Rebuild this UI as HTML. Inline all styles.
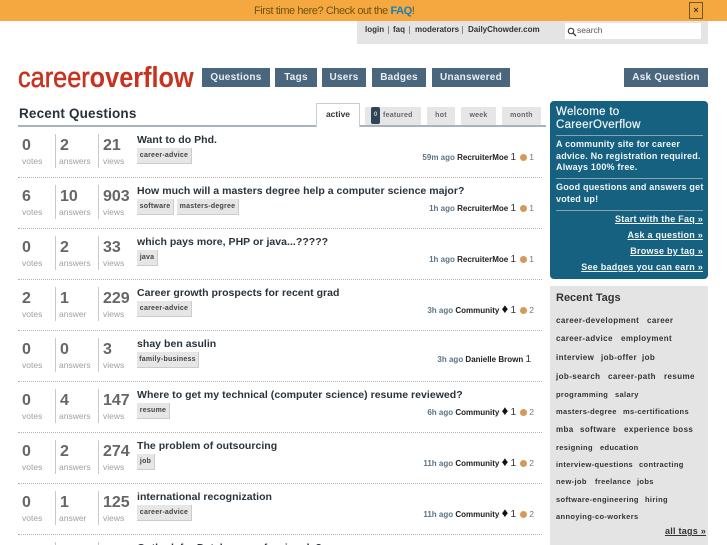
<!DOCTYPE html>
<html><head><meta charset="utf-8">
<style>
html,body{margin:0;padding:0;background:#fff}
body{width:727px;height:545px;overflow:hidden;position:relative;font-family:"Liberation Sans",sans-serif;color:#2a333c}
#w{position:absolute;left:0;top:0;width:727px;height:545px;overflow:hidden}
#w div,#w a,#w span.a{position:absolute;white-space:nowrap}
.nav{top:68px;height:19px;background:#4a667d;color:#e8eef2;font-weight:bold;font-size:10px;line-height:20px;text-align:center;letter-spacing:.25px}
.q{left:18px;width:530px;height:51px}
.sep{left:18px;width:524px;top:0;border-top:1px dotted #b5b5b5;height:0}
.n{font-size:16px;font-weight:bold;color:#666;top:2px;line-height:20px}
.l{font-size:8.5px;color:#a0a0a0;top:21px;line-height:12px}
.d{width:1px;height:34px;top:0;background:#c9c9c9}
.t{left:119px;top:-2px;font-size:10.5px;font-weight:bold;color:#2a333c;letter-spacing:.03px;line-height:16px}
.g{top:14px;height:15px;background:#e6e6e6;border-right:1px solid #ccc;border-bottom:1px solid #ccc;font-size:7px;font-weight:bold;color:#444;line-height:16px;text-align:center;letter-spacing:.25px}
.i{top:17px;font-size:8px;line-height:12px;font-weight:bold;color:#222;right:14px;text-align:right}
.i b{color:#5d7487}
.i u{text-decoration:none;font-weight:normal;font-size:10px;color:#333}
.i s{text-decoration:none;display:inline-block;width:7px;height:7px;background:#d39a5c;border-radius:50%;margin:0 2px 0 2px;vertical-align:-1px}
.i em{font-style:normal;font-weight:normal;color:#777;font-size:8.5px}
.i i{font-style:normal;font-size:13px;line-height:10px;color:#111}
.tab{top:107px;height:18px;background:#e6e6e6;font-size:7px;font-weight:bold;color:#666;text-align:center;line-height:18px;letter-spacing:.25px}
.sb{left:556px;font-size:9px;font-weight:bold;color:#f2f6f8;letter-spacing:.2px;line-height:11.5px}
.hr{left:556px;width:147px;height:1px;background:#8aa3b3}
.lk{right:24px;font-size:9px;font-weight:bold;color:#f2f6f8;text-decoration:underline;letter-spacing:.25px;line-height:12px}
.tg{font-size:8px;font-weight:bold;color:#333;line-height:12px;letter-spacing:.4px}
.ts{font-size:7.5px;letter-spacing:.35px}
</style></head><body><div id="w">

<div style="left:0;top:0;width:727px;height:21px;background:#f4a83f"></div>
<div style="left:254px;top:3px;font-size:11px;line-height:16px;color:#6e5314;letter-spacing:-.45px">First time here? Check out the <span style="color:#1a7fc0;font-weight:bold">FAQ</span>!</div>
<div style="left:689px;top:2px;width:12px;height:15px;background:#f3a93f;border:1px solid #6b5a20;color:#433;font-size:9px;font-weight:bold;line-height:15px;text-align:center">×</div>

<div style="left:357px;top:21px;width:351px;height:23px;background:#e4e4e4"></div>
<div style="left:565px;top:23px;width:136px;height:16px;background:#fff"></div>
<div style="left:365px;top:24px;font-size:8px;line-height:12px;font-weight:bold;color:#333">login</div>
<div style="left:393px;top:24px;font-size:8px;line-height:12px;font-weight:bold;color:#333">faq</div>
<div style="left:415px;top:24px;font-size:8px;line-height:12px;font-weight:bold;color:#333">moderators</div>
<div style="left:468px;top:24px;font-size:8px;line-height:12px;font-weight:bold;color:#333">DailyChowder.com</div>
<div style="left:388px;top:26px;width:1px;height:8px;background:#888"></div>
<div style="left:409px;top:26px;width:1px;height:8px;background:#888"></div>
<div style="left:462px;top:26px;width:1px;height:8px;background:#888"></div>
<svg style="position:absolute;left:567px;top:27px" width="10" height="10" viewBox="0 0 10 10"><circle cx="4" cy="4" r="2.7" fill="none" stroke="#444" stroke-width="1.2"/><path d="M6 6l3 3" stroke="#444" stroke-width="1.4"/></svg>
<div style="left:577px;top:24px;font-size:8.5px;line-height:12px;color:#555">search</div>

<div style="left:18px;top:61px;font-size:29px;line-height:34px;font-weight:bold;color:#c8321f;transform:scaleX(.872);transform-origin:0 0"><span style="font-weight:normal;-webkit-text-stroke:.5px #c8321f">career</span>overflow</div>
<div class="nav" style="left:202px;width:68px">Questions</div>
<div class="nav" style="left:275px;width:42px">Tags</div>
<div class="nav" style="left:322px;width:44px">Users</div>
<div class="nav" style="left:372px;width:54px">Badges</div>
<div class="nav" style="left:432px;width:78px">Unanswered</div>
<div class="nav" style="left:624px;width:84px">Ask Question</div>

<div style="left:19px;top:105px;font-size:13.5px;line-height:18px;font-weight:bold;letter-spacing:.17px;color:#27323c">Recent Questions</div>
<div style="left:18px;top:125px;width:528px;height:2px;background:#a7b3bd"></div>
<div style="left:316px;top:103px;width:42px;height:23px;background:#fff;border:1px solid #ccc;border-bottom:none;font-size:8.5px;font-weight:bold;color:#333;text-align:center;line-height:20px">active</div>
<div class="tab" style="left:365px;width:56px"></div>
<div style="left:371px;top:107px;width:9px;height:17px;background:#2f4557;border-radius:2px;color:#ccc;font-size:6px;font-weight:bold;text-align:center;line-height:16px">0</div>
<div style="left:383px;top:109px;font-size:7px;font-weight:bold;color:#666;line-height:14px;letter-spacing:.25px">featured</div>
<div class="tab" style="left:427px;width:28px">hot</div>
<div class="tab" style="left:461px;width:35px">week</div>
<div class="tab" style="left:502px;width:39px">month</div>

<!-- rows -->
<div class="q" style="top:134px">
<div class="n" style="left:4px">0</div><div class="l" style="left:4px">votes</div><div class="d" style="left:37px"></div>
<div class="n" style="left:42px">2</div><div class="l" style="left:41px">answers</div><div class="d" style="left:80px"></div>
<div class="n" style="left:85px">21</div><div class="l" style="left:85px">views</div>
<div class="t">Want to do Phd.</div>
<div class="g" style="left:119px;width:54px">career-advice</div>
<div class="i"><b>59m ago</b> RecruiterMoe <u>1</u> <s></s><em>1</em></div>
</div>
<div class="sep" style="top:177px"></div>

<div class="q" style="top:185px">
<div class="n" style="left:4px">6</div><div class="l" style="left:4px">votes</div><div class="d" style="left:37px"></div>
<div class="n" style="left:42px">10</div><div class="l" style="left:41px">answers</div><div class="d" style="left:80px"></div>
<div class="n" style="left:85px">903</div><div class="l" style="left:85px">views</div>
<div class="t">How much will a masters degree help a computer science major?</div>
<div class="g" style="left:119px;width:36px">software</div>
<div class="g" style="left:159px;width:61px">masters-degree</div>
<div class="i"><b>1h ago</b> RecruiterMoe <u>1</u> <s></s><em>1</em></div>
</div>
<div class="sep" style="top:228px"></div>

<div class="q" style="top:236px">
<div class="n" style="left:4px">0</div><div class="l" style="left:4px">votes</div><div class="d" style="left:37px"></div>
<div class="n" style="left:42px">2</div><div class="l" style="left:41px">answers</div><div class="d" style="left:80px"></div>
<div class="n" style="left:85px">33</div><div class="l" style="left:85px">views</div>
<div class="t">which pays more, PHP or java...?????</div>
<div class="g" style="left:119px;width:20px">java</div>
<div class="i"><b>1h ago</b> RecruiterMoe <u>1</u> <s></s><em>1</em></div>
</div>
<div class="sep" style="top:279px"></div>

<div class="q" style="top:287px">
<div class="n" style="left:4px">2</div><div class="l" style="left:4px">votes</div><div class="d" style="left:37px"></div>
<div class="n" style="left:42px">1</div><div class="l" style="left:41px">answer</div><div class="d" style="left:80px"></div>
<div class="n" style="left:85px">229</div><div class="l" style="left:85px">views</div>
<div class="t">Career growth prospects for recent grad</div>
<div class="g" style="left:119px;width:54px">career-advice</div>
<div class="i"><b>3h ago</b> Community <i>♦</i> <u>1</u> <s></s><em>2</em></div>
</div>
<div class="sep" style="top:330px"></div>

<div class="q" style="top:338px">
<div class="n" style="left:4px">0</div><div class="l" style="left:4px">votes</div><div class="d" style="left:37px"></div>
<div class="n" style="left:42px">0</div><div class="l" style="left:41px">answers</div><div class="d" style="left:80px"></div>
<div class="n" style="left:85px">3</div><div class="l" style="left:85px">views</div>
<div class="t">shay ben asulin</div>
<div class="g" style="left:119px;width:61px">family-business</div>
<div class="i" style="top:16px;right:17px"><b>3h ago</b> Danielle Brown <u>1</u></div>
</div>
<div class="sep" style="top:381px"></div>

<div class="q" style="top:389px">
<div class="n" style="left:4px">0</div><div class="l" style="left:4px">votes</div><div class="d" style="left:37px"></div>
<div class="n" style="left:42px">4</div><div class="l" style="left:41px">answers</div><div class="d" style="left:80px"></div>
<div class="n" style="left:85px">147</div><div class="l" style="left:85px">views</div>
<div class="t">Where to get my technical (computer science) resume reviewed?</div>
<div class="g" style="left:119px;width:32px">resume</div>
<div class="i"><b>6h ago</b> Community <i>♦</i> <u>1</u> <s></s><em>2</em></div>
</div>
<div class="sep" style="top:432px"></div>

<div class="q" style="top:440px">
<div class="n" style="left:4px">0</div><div class="l" style="left:4px">votes</div><div class="d" style="left:37px"></div>
<div class="n" style="left:42px">2</div><div class="l" style="left:41px">answers</div><div class="d" style="left:80px"></div>
<div class="n" style="left:85px">274</div><div class="l" style="left:85px">views</div>
<div class="t">The problem of outsourcing</div>
<div class="g" style="left:119px;width:17px">job</div>
<div class="i"><b>11h ago</b> Community <i>♦</i> <u>1</u> <s></s><em>2</em></div>
</div>
<div class="sep" style="top:483px"></div>

<div class="q" style="top:491px">
<div class="n" style="left:4px">0</div><div class="l" style="left:4px">votes</div><div class="d" style="left:37px"></div>
<div class="n" style="left:42px">1</div><div class="l" style="left:41px">answer</div><div class="d" style="left:80px"></div>
<div class="n" style="left:85px">125</div><div class="l" style="left:85px">views</div>
<div class="t">international recognization</div>
<div class="g" style="left:119px;width:54px">career-advice</div>
<div class="i"><b>11h ago</b> Community <i>♦</i> <u>1</u> <s></s><em>2</em></div>
</div>
<div class="sep" style="top:534px"></div>
<div class="d" style="left:55px;top:542px"></div>
<div class="d" style="left:98px;top:542px"></div>
<div class="t" style="left:137px;top:540px">Outlook for Database professionals?</div>

<!-- welcome -->
<div style="left:550px;top:101px;width:158px;height:178px;background:#15617f;border-radius:4px"></div>
<div class="sb" style="top:106px;font-size:11.5px;font-weight:normal;line-height:13px;letter-spacing:.3px;-webkit-text-stroke:.2px #f2f6f8">Welcome to<br>CareerOverflow</div>
<div class="hr" style="top:135px"></div>
<div class="sb" style="top:139px">A community site for career<br>advice. No registration required.<br>Always 100% free.</div>
<div class="hr" style="top:178px"></div>
<div class="sb" style="top:182px">Good questions and answers get<br>voted up!</div>
<div class="hr" style="top:210px"></div>
<a class="lk" style="top:213px">Start with the Faq »</a>
<a class="lk" style="top:229px">Ask a question »</a>
<a class="lk" style="top:245px">Browse by tag »</a>
<a class="lk" style="top:261px">See badges you can earn »</a>

<!-- tags -->
<div style="left:550px;top:286px;width:158px;height:259px;background:#e4e4e4"></div>
<div style="left:556px;top:291px;font-size:11px;line-height:15px;font-weight:bold;color:#333">Recent Tags</div>
<div class="tg" style="left:556px;top:315px">career-development</div><div class="tg" style="left:647px;top:315px">career</div>
<div class="tg" style="left:556px;top:333px">career-advice</div><div class="tg" style="left:621px;top:333px">employment</div>
<div class="tg" style="left:556px;top:352px">interview</div><div class="tg" style="left:601px;top:352px">job-offer</div><div class="tg" style="left:642px;top:352px">job</div>
<div class="tg" style="left:556px;top:371px">job-search</div><div class="tg" style="left:608px;top:371px">career-path</div><div class="tg" style="left:664px;top:371px">resume</div>
<div class="tg ts" style="left:556px;top:389px">programming</div><div class="tg ts" style="left:615px;top:389px">salary</div>
<div class="tg ts" style="left:556px;top:406px">masters-degree</div><div class="tg ts" style="left:623px;top:406px">ms-certifications</div>
<div class="tg" style="left:556px;top:424px">mba</div><div class="tg" style="left:580px;top:424px">software</div><div class="tg" style="left:624px;top:424px">experience</div><div class="tg" style="left:673px;top:424px">boss</div>
<div class="tg ts" style="left:556px;top:442px">resigning</div><div class="tg ts" style="left:600px;top:442px">education</div>
<div class="tg ts" style="left:556px;top:459px">interview-questions</div><div class="tg ts" style="left:639px;top:459px">contracting</div>
<div class="tg ts" style="left:556px;top:476px">new-job</div><div class="tg ts" style="left:595px;top:476px">freelance</div><div class="tg ts" style="left:637px;top:476px">jobs</div>
<div class="tg ts" style="left:556px;top:494px">software-engineering</div><div class="tg ts" style="left:645px;top:494px">hiring</div>
<div class="tg ts" style="left:556px;top:511px">annoying-co-workers</div>
<a class="lk" style="right:21px;top:525px;color:#333">all tags »</a>
</div></body></html>
